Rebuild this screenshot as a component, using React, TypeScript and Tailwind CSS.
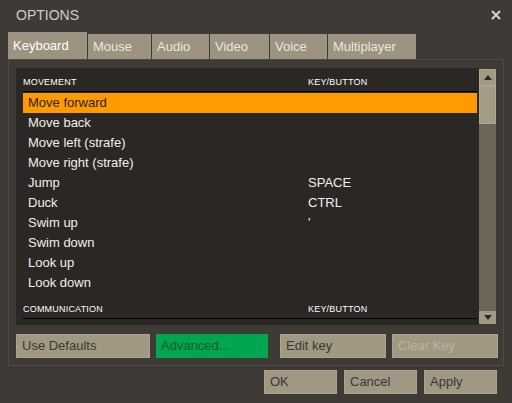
import React from "react";

const rows: [string, string][] = [
  ["Move forward", ""],
  ["Move back", ""],
  ["Move left (strafe)", ""],
  ["Move right (strafe)", ""],
  ["Jump", "SPACE"],
  ["Duck", "CTRL"],
  ["Swim up", "'"],
  ["Swim down", ""],
  ["Look up", ""],
  ["Look down", ""],
];

const tabs = [
  { label: "Keyboard", w: "w-[79px]", active: true },
  { label: "Mouse", w: "w-[63px]" },
  { label: "Audio", w: "w-[57px]" },
  { label: "Video", w: "w-[59px]" },
  { label: "Voice", w: "w-[57px]" },
  { label: "Multiplayer", w: "w-[88px]" },
];

function Header({ title }: { title: string }) {
  return (
    <div className="flex border-b border-black pb-[3px] text-[9px] leading-[11px] tracking-[0.2px] text-white">
      <div className="w-[285px]">{title}</div>
      <div>KEY/BUTTON</div>
    </div>
  );
}

function Btn({ label, className, text = "text-[#3a3830]" }: { label: string; className: string; text?: string }) {
  return (
    <div className={`flex h-[24px] items-center border border-[#aba38e] bg-[#a09883] pl-[5px] text-[13px] ${text} ${className}`}>
      {label}
    </div>
  );
}

function Arrow({ down }: { down?: boolean }) {
  return (
    <svg width="8" height="5" viewBox="0 0 8 5">
      <path d={down ? "M0 0h8L4 5z" : "M4 0l4 5H0z"} fill="#2e2b27" />
    </svg>
  );
}

export default function App() {
  return (
    <div className="h-[403px] w-[512px] overflow-hidden bg-[#3e3b37] font-['Liberation_Sans',Arial,sans-serif]">
      <div className="flex h-[32px] items-start justify-between pl-4 pr-[11px] pt-[7px]">
        <span className="text-[14px] leading-[16px] text-[#cfccc4]">OPTIONS</span>
        <svg width="10" height="10" viewBox="0 0 10 10" className="mt-[3px]">
          <path d="M1 1l8 8M9 1l-8 8" stroke="#d6d2ca" strokeWidth="2" />
        </svg>
      </div>

      <div className="flex h-[27px] items-end gap-[1px] pl-2">
        {tabs.map((t) => (
          <div
            key={t.label}
            className={`flex items-center bg-[#9c9380] text-[13px] ${t.w} ${
              t.active ? "h-[27px] pl-[5px] text-white" : "h-[25px] pl-[5px] text-[#ebe7de]"
            }`}
          >
            {t.label}
          </div>
        ))}
      </div>

      <div className="mx-2 h-[307px] border border-[#4e4a44] pl-[7px] pt-[8px]">
        <div className="flex h-[257px] w-[480px]">
          <div className="w-[463px] overflow-hidden bg-[#2a2724] pl-[7px] pt-[9px]">
            <div className="w-[454px]">
              <Header title="MOVEMENT" />
              <div className="mt-[1px]">
                {rows.map(([name, key], i) => (
                  <div
                    key={name}
                    className={`flex h-[20px] items-center pl-[5px] text-[13px] ${
                      i === 0 ? "bg-[#ff9b00] text-[#2a2418]" : "text-[#f2f0ea]"
                    }`}
                  >
                    <div className="w-[280px]">{name}</div>
                    <div>{key}</div>
                  </div>
                ))}
              </div>
              <div className="pt-[11px]">
                <Header title="COMMUNICATION" />
              </div>
            </div>
          </div>
          <div className="flex w-[17px] flex-col py-[1px]">
            <div className="flex h-[17px] items-center justify-center border border-[#aea690] bg-[#a19984]">
              <Arrow />
            </div>
            <div className="h-[38px] border border-[#aea690] bg-[#a39b86]" />
            <div className="flex-1 bg-[#6c6658]" />
            <div className="flex h-[13px] items-center justify-center bg-[#a19984]">
              <Arrow down />
            </div>
          </div>
        </div>

        <div className="mt-[9px] flex">
          <Btn label="Use Defaults" className="w-[134px]" />
          <div className="ml-[6px] flex h-[24px] w-[112px] items-center bg-[#00a650] pl-[5px] text-[13px] text-[#1f5a36]">
            Advanced...
          </div>
          <Btn label="Edit key" className="ml-[12px] w-[106px]" />
          <Btn label="Clear Key" className="ml-[6px] w-[106px]" text="text-[#bbb3a0]" />
        </div>
      </div>

      <div className="mt-[4px] flex justify-end gap-[7px] pr-[15px]">
        <Btn label="OK" className="w-[73px]" />
        <Btn label="Cancel" className="w-[73px]" />
        <Btn label="Apply" className="w-[73px]" />
      </div>
    </div>
  );
}
